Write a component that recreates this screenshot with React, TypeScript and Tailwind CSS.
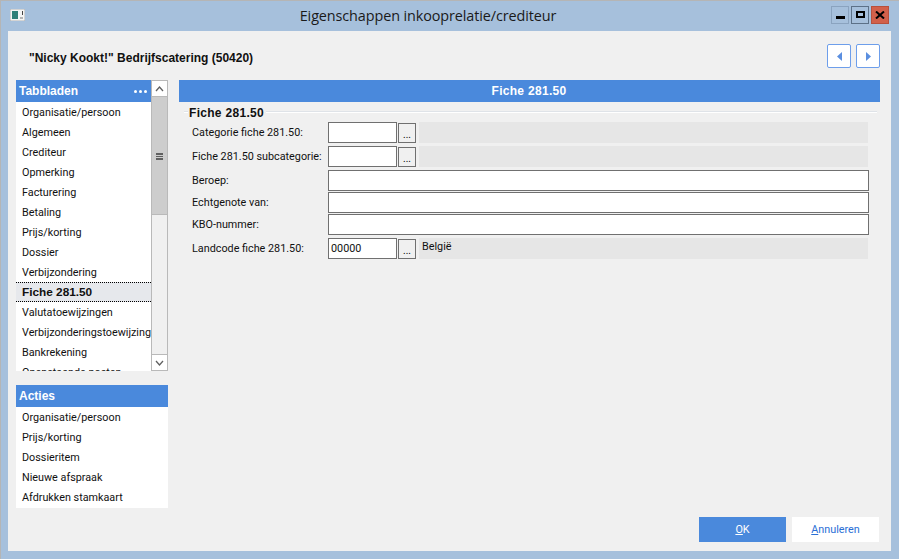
const font = "font-['Roboto',sans-serif]";
const bold = "font-['Liberation_Sans',sans-serif] font-bold";
const tabs = ["Organisatie/persoon","Algemeen","Crediteur","Opmerking","Facturering","Betaling","Prijs/korting","Dossier","Verbijzondering","Fiche 281.50","Valutatoewijzingen","Verbijzonderingstoewijzingen","Bankrekening","Openstaande posten"];
const acties = ["Organisatie/persoon","Prijs/korting","Dossieritem","Nieuwe afspraak","Afdrukken stamkaart"];

function Lookup() {
  return <div className="w-[18px] h-[20px] ml-px mt-px bg-[#f0f0f0] border border-[#707070] text-[10px] leading-[22px] text-center text-black">...</div>;
}
function Row({ label, value, kind, desc, mt }: { label: string; value?: string; kind: "lookup" | "text"; desc?: string; mt: string }) {
  return (
    <div className={`flex h-[21px] ${mt}`}>
      <div className="w-[136px] shrink-0 text-[10.8px] leading-[21px] text-[#111] whitespace-nowrap">{label}</div>
      {kind === "text" ? (
        <div className="w-[541px] h-[21px] bg-white border border-[#707070]" />
      ) : (
        <>
          <div className="w-[69px] h-[21px] bg-white border border-[#707070] px-[2px] text-[10.8px] leading-[19px] text-[#111]">{value}</div>
          <Lookup />
          <div className="w-[449px] h-[21px] ml-[3px] bg-[#e6e6e6] px-[3px] text-[10.8px] leading-[18px] text-[#111]">{desc}</div>
        </>
      )}
    </div>
  );
}

export default function App() {
  return (
    <div className={`${font} w-[899px] h-[559px] bg-[#a6c0dc] border-t border-l border-[#b5b5b5] flex flex-col overflow-hidden`}>
      <div className="h-[30px] shrink-0 flex items-center pl-[9px] pr-[10px]">
        <svg width="15" height="12" viewBox="0 0 15 12" className="shrink-0 mt-[-2px]">
          <rect x="0" y="0" width="15" height="12" fill="#f4f4f4" stroke="#8a8a8a" strokeWidth="0.6" />
          <rect x="2" y="2" width="6" height="8" fill="#2f7f78" />
          <rect x="10" y="8" width="3" height="2" fill="#b5b5b5" />
          <rect x="12" y="2" width="1" height="4" fill="#444" />
        </svg>
        <div className="flex-1 text-center text-[14.4px] font-['Open_Sans',sans-serif] text-[#1a1a1a] mt-[-1px] tracking-[-0.1px]">Eigenschappen inkooprelatie/crediteur</div>
        <div className="flex gap-[2px] mt-[-3px]">
          <div className="w-[18px] h-[18px] border border-[#8aa3bf] flex items-center justify-center">
            <div className="w-[9px] h-[3px] bg-black mt-[5px]" />
          </div>
          <div className="w-[18px] h-[18px] border border-[#5c7188] flex items-center justify-center">
            <div className="w-[9px] h-[7px] border-2 border-black mt-[-1px]" />
          </div>
          <div className="w-[18px] h-[18px] bg-[#d2604a] border border-[#b8503c] flex items-center justify-center">
            <svg width="10" height="8" viewBox="0 0 10 8"><path d="M1 0.5 L9 7.5 M9 0.5 L1 7.5" stroke="#000" strokeWidth="2" /></svg>
          </div>
        </div>
      </div>
      <div className="ml-[7px] w-[883px] h-[520px] shrink-0 bg-[#f0f0f0] flex flex-col pl-[8px] pr-[11px]">
        <div className="h-[49px] shrink-0 flex items-start">
          <div className={`${bold} ml-[13px] mt-[20px] text-[12px] leading-[14px] text-[#111] flex-1`}>"Nicky Kookt!" Bedrijfscatering (50420)</div>
          <div className="flex gap-[5px] mt-[13px]">
            <div className="w-[24px] h-[24px] bg-white border border-[#6d9eeb] rounded-[2px] flex items-center justify-center">
              <svg width="5" height="9" viewBox="0 0 5 9"><path d="M5 0 V9 L0 4.5 Z" fill="#5b8fe0" /></svg>
            </div>
            <div className="w-[24px] h-[24px] bg-white border border-[#6d9eeb] rounded-[2px] flex items-center justify-center">
              <svg width="5" height="9" viewBox="0 0 5 9"><path d="M0 0 V9 L5 4.5 Z" fill="#5b8fe0" /></svg>
            </div>
          </div>
        </div>
        <div className="flex-1 flex">
          <div className="w-[152px] shrink-0">
            <div className="relative h-[291px] flex">
              <div className="w-[135px] shrink-0">
                <div className={`${bold} h-[22px] bg-[#4a89dc] text-white text-[12px] leading-[22px] pl-[3px] flex justify-between pr-[4px]`}>
                  <span>Tabbladen</span>
                  <span className="flex items-center gap-[2px]">
                    <i className="w-[3px] h-[3px] bg-white rounded-full" />
                    <i className="w-[3px] h-[3px] bg-white rounded-full" />
                    <i className="w-[3px] h-[3px] bg-white rounded-full" />
                  </span>
                </div>
                <div className="h-[269px] bg-white overflow-hidden">
                  {tabs.map((t) => (
                    t === "Fiche 281.50"
                      ? <div key={t} className={`${bold} h-[20px] bg-[#e6e8ec] border-y border-dotted border-black text-[11.8px] leading-[18px] pl-[6px] text-[#111]`}>{t}</div>
                      : <div key={t} className="h-[20px] text-[10.8px] leading-[21px] pl-[6px] text-[#111] whitespace-nowrap overflow-hidden">{t}</div>
                  ))}
                </div>
              </div>
              <div className="w-[17px] h-[291px] shrink-0 border border-[#b9b9b9] bg-[#f0f0f0] flex flex-col">
                <div className="h-[16px] bg-white border-b border-[#b9b9b9] flex items-center justify-center">
                  <svg width="9" height="6" viewBox="0 0 9 6"><path d="M1 5 L4.5 1 L8 5" fill="none" stroke="#606060" strokeWidth="1.3" /></svg>
                </div>
                <div className="h-[118px] bg-[#cdcdcd] border-b border-[#b9b9b9] flex items-center justify-center">
                  <div className="w-[7px] h-[7px] mt-[2px] border-y-2 border-[#606060] flex items-center"><div className="w-full h-px bg-[#606060]" /></div>
                </div>
                <div className="flex-1" />
                <div className="h-[16px] bg-white border-t border-[#b9b9b9] flex items-center justify-center">
                  <svg width="9" height="6" viewBox="0 0 9 6"><path d="M1 1 L4.5 5 L8 1" fill="none" stroke="#606060" strokeWidth="1.3" /></svg>
                </div>
              </div>
            </div>
            <div className="mt-[14px]">
              <div className={`${bold} h-[22px] bg-[#4a89dc] text-white text-[12px] leading-[22px] pl-[3px]`}>Acties</div>
              <div className="h-[101px] bg-white">
                {acties.map((t) => (
                  <div key={t} className="h-[20px] text-[10.8px] leading-[21px] pl-[6px] text-[#111]">{t}</div>
                ))}
              </div>
            </div>
          </div>
          <div className="ml-[11px] flex-1 flex flex-col">
            <div className={`${bold} h-[22px] bg-[#4a89dc] text-white text-[12px] tracking-[0.3px] leading-[22px] text-center pr-px`}>Fiche 281.50</div>
            <div className="flex items-center h-[20px] ml-[5px] mr-[3px]">
              <div className="w-[4px] h-[2px] bg-white border-t border-[#dfe3e8]" />
              <div className={`${bold} px-[1px] text-[12px] text-[#111] tracking-[0.3px] leading-[14px] mt-[1px]`}>Fiche 281.50</div>
              <div className="flex-1 h-[2px] ml-[1px] bg-white border-t border-[#dfe3e8]" />
            </div>
            <div className="pl-[13px]">
              <Row label="Categorie fiche 281.50:" kind="lookup" mt="" />
              <Row label="Fiche 281.50 subcategorie:" kind="lookup" mt="mt-[3px]" />
              <Row label="Beroep:" kind="text" mt="mt-[3px]" />
              <Row label="Echtgenote van:" kind="text" mt="mt-px" />
              <Row label="KBO-nummer:" kind="text" mt="mt-px" />
              <Row label="Landcode fiche 281.50:" value="00000" desc="België" kind="lookup" mt="mt-[3px]" />
            </div>
            <div className="flex-1" />
            <div className="flex justify-end gap-[6px] mb-[9px] mr-px">
              <div className="w-[87px] h-[25px] bg-[#4a89dc] text-white text-[10.8px] leading-[26px] text-center"><u>O</u>K</div>
              <div className="w-[87px] h-[25px] bg-white text-[#2a6fd6] text-[10.8px] leading-[26px] text-center"><u>A</u>nnuleren</div>
            </div>
          </div>
        </div>
      </div>
    </div>
  );
}
